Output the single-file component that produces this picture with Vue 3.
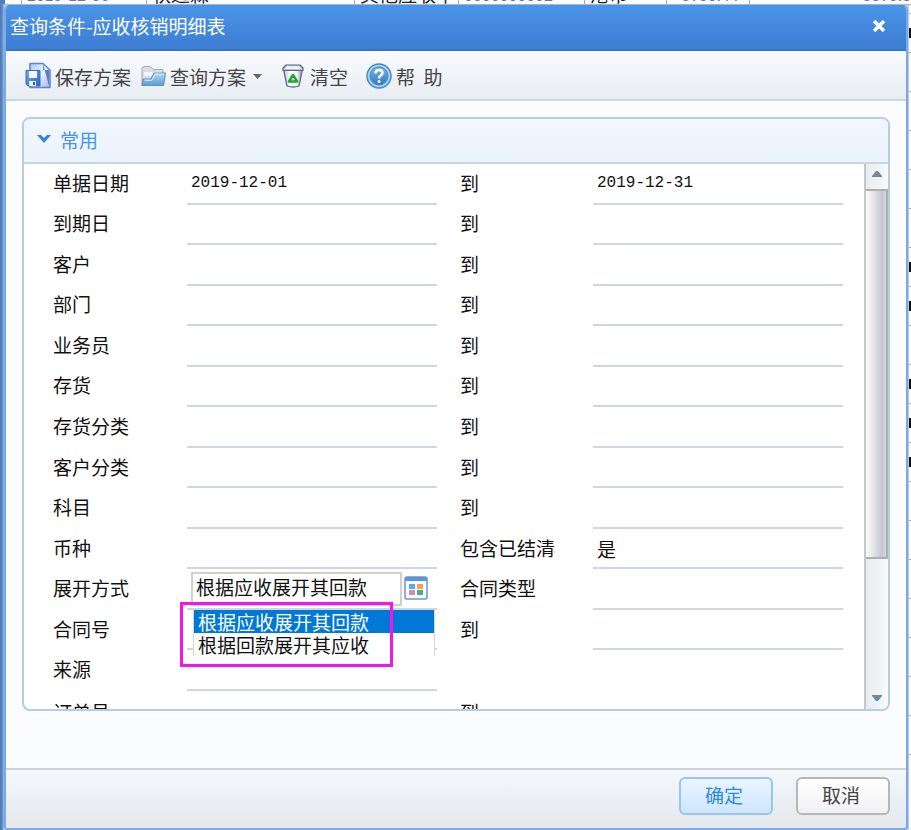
<script setup>
import { ref } from 'vue'

const ledger = [
  { cls: 'c-date', text: '2019-12-06' },
  { cls: 'c-name', text: '秋逸霖' },
  { cls: 'c-type', text: '其他应收单' },
  { cls: 'c-no', text: '0000000002' },
  { cls: 'c-cur', text: '港币' },
  { cls: 'c-amt', text: '8700.44' },
  { cls: 'c-end', text: '8870.3' },
]

const gutter = [
  { mark: true }, { mark: false }, { mark: false }, { mark: false }, { mark: false },
  { mark: false }, { mark: true }, { mark: true }, { mark: false }, { mark: true },
  { mark: true }, { mark: true }, { mark: false }, { mark: false }, { mark: false },
  { mark: false }, { mark: false }, { mark: false }, { mark: false }, { mark: false },
]

const rows = ref([
  { label: '单据日期', from: '2019-12-01', label2: '到', to: '2019-12-31', date: true },
  { label: '到期日', from: '', label2: '到', to: '' },
  { label: '客户', from: '', label2: '到', to: '' },
  { label: '部门', from: '', label2: '到', to: '' },
  { label: '业务员', from: '', label2: '到', to: '' },
  { label: '存货', from: '', label2: '到', to: '' },
  { label: '存货分类', from: '', label2: '到', to: '' },
  { label: '客户分类', from: '', label2: '到', to: '' },
  { label: '科目', from: '', label2: '到', to: '' },
  { label: '币种', from: '', label2: '包含已结清', to: '是' },
  { label: '展开方式', from: '根据应收展开其回款', label2: '合同类型', to: '', picker: true },
  { label: '合同号', from: '', label2: '到', to: '' },
  { label: '来源', from: '', label2: '', to: '' },
])

const options = ['根据应收展开其回款', '根据回款展开其应收']

function choose(row, option) {
  row.from = option
}
</script>

<template>
  <div class="desktop">
    <div class="ledger">
      <span v-for="c in ledger" :key="c.cls" :class="['cell', c.cls]">{{ c.text }}</span>
    </div>
    <div class="stage">
      <main class="dialog">
        <header class="titlebar">
          <h1>查询条件-应收核销明细表</h1>
          <button type="button" class="close" aria-label="关闭">
            <svg width="16" height="16" viewBox="0 0 16 16"><path d="M3 3L13 13M13 3L3 13" stroke="#fff" stroke-width="3.6" stroke-linejoin="round" /></svg>
          </button>
        </header>

        <nav class="toolbar">
          <button type="button" class="tool save">
            <svg width="28" height="28" viewBox="0 0 28 28">
              <defs>
                <linearGradient id="doc" x1="0" y1="0" x2="1" y2="1"><stop offset="0" stop-color="#a9c9f0" /><stop offset=".5" stop-color="#eaf3fc" /><stop offset="1" stop-color="#9cb9e6" /></linearGradient>
                <linearGradient id="disk" x1="0" y1="0" x2="1" y2="1"><stop offset="0" stop-color="#79a8e8" /><stop offset="1" stop-color="#2f62bd" /></linearGradient>
              </defs>
              <path d="M6 1.500H19L26 8V25.500H6Z" fill="url(#doc)" stroke="#6684c4" stroke-width="1.600" stroke-linejoin="round" />
              <path d="M19 2V8H25V24Z" fill="#5680ce" />
              <path d="M2 8.500H16V24H4L2 22Z" fill="url(#disk)" stroke="#3d68bd" stroke-linejoin="round" />
              <path d="M5 9H13V16H5Z" fill="#f4f9ff" /><path d="M5 19H12V24H5Z" fill="#e6effc" /><path d="M9 20H11V23H9Z" fill="#2c59b4" />
            </svg>
            <span>保存方案</span>
          </button>
          <button type="button" class="tool find">
            <svg width="28" height="28" viewBox="0 0 28 28">
              <defs><linearGradient id="fold" x1="0" y1="0" x2="0" y2="1"><stop offset="0" stop-color="#b5d9f4" /><stop offset="1" stop-color="#5c9bd0" /></linearGradient></defs>
              <path d="M3 23V6L5 4.500H11L14 7.500H24V12" fill="#d9dde0" stroke="#a5adb4" stroke-linejoin="round" />
              <path d="M5 10H22V14H5Z" fill="#f3f5f7" />
              <path d="M3 23.500L4 17H12L15 11H26.500L24.500 23.500Z" fill="url(#fold)" stroke="#5d96c6" stroke-width="1.200" stroke-linejoin="round" />
              <path d="M5.500 18.200H13L16 12.200H25" fill="none" stroke="#dceffb" />
            </svg>
            <span>查询方案</span>
            <svg class="caret" width="9" height="5" viewBox="0 0 9 5"><path d="M0 0H9L4.500 5Z" fill="#666" /></svg>
          </button>
          <button type="button" class="tool clear">
            <svg width="28" height="28" viewBox="0 0 28 28">
              <defs><linearGradient id="bin" x1="0" y1="0" x2="1" y2="0"><stop offset="0" stop-color="#b9c5d6" /><stop offset=".35" stop-color="#fff" /><stop offset=".7" stop-color="#f3f6fa" /><stop offset="1" stop-color="#8496ae" /></linearGradient></defs>
              <path d="M4.500 7L8 24Q14 26 20 24L23.500 7Z" fill="url(#bin)" stroke="#5d6c83" stroke-width="1.300" />
              <path d="M7 3H21L24 6V8.500H4V6Z" fill="#b9c3d2" stroke="#59677f" stroke-width="1.200" stroke-linejoin="round" />
              <path d="M8 4H20L22 7H6Z" fill="#edf1f6" />
              <path d="M14 13L18 19.500H10Z" fill="#f4faf4" stroke="#26a52d" stroke-width="2.600" stroke-linejoin="round" />
            </svg>
            <span>清空</span>
          </button>
          <button type="button" class="tool help">
            <svg width="28" height="28" viewBox="0 0 28 28">
              <defs><linearGradient id="ball" x1="0" y1="0" x2="0" y2="1"><stop offset="0" stop-color="#7eb4e4" /><stop offset="1" stop-color="#3178bf" /></linearGradient></defs>
              <circle cx="14" cy="14" r="12" fill="#a3d3f0" stroke="#4a8bbd" stroke-width="1.500" />
              <circle cx="14" cy="14" r="9" fill="url(#ball)" stroke="#4388c2" />
              <path d="M10.500 11.500Q10.500 8 14 8Q17.500 8 17.500 11Q17.500 12.500 15.500 13.800Q14 14.800 14 16.500" fill="none" stroke="#fff" stroke-width="2.400" />
              <circle cx="14" cy="19.500" r="1.500" fill="#fff" />
            </svg>
            <span>帮&nbsp; 助</span>
          </button>
        </nav>

        <section class="content">
          <div class="panel">
            <h2 class="panel-head">
              <svg width="16" height="10" viewBox="0 0 16 10"><path d="M1 1H5L8 4L11 1H15L8 9Z" fill="#3583dc" /></svg>
              <span>常用</span>
            </h2>
            <div class="panel-body">
              <form class="fields" @submit.prevent>
                <div class="grid">
                  <div v-for="(row, i) in rows" :key="row.label" class="row">
                    <label :for="'from' + i">{{ row.label }}</label>
                    <div v-if="row.picker" class="field combo">
                      <input :id="'from' + i" v-model="row.from" type="text" class="combo-input" />
                      <button type="button" class="pick" aria-label="选择">
                        <svg width="24" height="24" viewBox="0 0 24 24">
                          <rect x="1" y="1" width="22" height="22" rx="2" fill="#f8fbff" stroke="#7393cd" stroke-width="1.500" />
                          <path d="M1 2Q1 1 2 1H22Q23 1 23 2V5H1Z" fill="#5b96d8" />
                          <path d="M5 8H11V13H5Z" fill="#5aaaf5" /><path d="M13 8H19V13H13Z" fill="#f3a34e" />
                          <path d="M5 14H11V19H5Z" fill="#cf8fb4" /><path d="M13 14H19V19H13Z" fill="#51a99e" />
                        </svg>
                      </button>
                      <div class="menu" role="listbox">
                        <button v-for="o in options" :key="o" type="button" role="option" :aria-selected="o === row.from" :class="['option', { active: o === row.from }]" @click="choose(row, o)">{{ o }}</button>
                      </div>
                      <span class="highlight"></span>
                    </div>
                    <input v-else :id="'from' + i" v-model="row.from" type="text" :class="['field', { date: row.date }]" />
                    <template v-if="row.label2">
                      <label :for="'to' + i">{{ row.label2 }}</label>
                      <input :id="'to' + i" v-model="row.to" type="text" :class="['field', { date: row.date }]" />
                    </template>
                  </div>
                </div>
                <div class="row last">
                  <label for="orderFrom">订单号</label>
                  <input id="orderFrom" type="text" class="field" />
                  <label for="orderTo">到</label>
                  <input id="orderTo" type="text" class="field" />
                </div>
              </form>
              <div class="scroll">
                <button type="button" class="arrow" aria-label="向上"><svg width="10" height="6" viewBox="0 0 10 6"><path d="M0 6V5L4 0H6L10 5V6Z" fill="#75879a" /></svg></button>
                <div class="thumb"></div>
                <div class="track"></div>
                <button type="button" class="arrow down" aria-label="向下"><svg width="10" height="6" viewBox="0 0 10 6"><path d="M0 0H10V1L6 6H4L0 1Z" fill="#75879a" /></svg></button>
              </div>
            </div>
          </div>
        </section>

        <footer class="footer">
          <button type="button" class="btn primary">确定</button>
          <button type="button" class="btn">取消</button>
        </footer>
      </main>
      <div class="gutter">
        <div v-for="(g, i) in gutter" :key="i" :class="['tick', { mark: g.mark }]"></div>
      </div>
    </div>
  </div>
</template>

<style>
body {
  background: #f8fafc;
}
</style>

<style scoped>
* {
  box-sizing: border-box;
}
.desktop {
  display: flex;
  flex-direction: column;
  height: 100vh;
  overflow: hidden;
  font-family: "Noto Sans CJK SC", sans-serif;
  font-size: 19px;
  color: #111;
}
button,
input {
  font: inherit;
  color: inherit;
  margin: 0;
  padding: 0;
  border: 0;
  background: none;
  border-radius: 0;
}
button {
  cursor: pointer;
}
svg {
  display: block;
  flex: none;
}
.ledger {
  display: flex;
  align-items: flex-end;
  flex: none;
  height: 5px;
  overflow: hidden;
  padding-left: 16px;
  border-left: 5px solid #4f81bd;
  border-bottom: 1px solid #a7b6c6;
  background: #f9fbfd;
}
.cell {
  flex: none;
  line-height: 20px;
  font-size: 16px;
  white-space: nowrap;
  color: #222;
  border-right: 1px solid #aaa;
}
.c-date {
  width: 126px;
  padding-left: 5px;
  color: #777;
  border-left: 1px solid #aaa;
}
.c-name {
  width: 208px;
  padding-left: 5px;
  font-size: 19px;
}
.c-type {
  width: 104px;
  padding-left: 5px;
  font-size: 19px;
}
.c-no {
  width: 126px;
  padding-left: 5px;
  color: #777;
}
.c-cur {
  width: 82px;
  padding-left: 5px;
  font-size: 19px;
}
.c-amt {
  width: 83px;
  padding-left: 14px;
  color: #777;
}
.c-end {
  flex: 1;
  border-right: 0;
  text-align: right;
  color: #777;
}
.stage {
  display: flex;
  flex: 1;
  min-height: 0;
  background: linear-gradient(90deg, #4878b4, #6795cc 3px, #b8cde4 4px);
}
.dialog {
  display: flex;
  flex: 1;
  flex-direction: column;
  min-width: 0;
  margin-left: 4px;
  border: 2px solid #78a9e9;
  border-top: 0;
  border-radius: 5px 5px 4px 4px;
  background: #fbfcff;
  overflow: hidden;
}
.titlebar {
  display: flex;
  align-items: center;
  justify-content: space-between;
  flex: none;
  height: 46px;
  margin: 0 -2px;
  padding: 0 21px 2px 6px;
  color: #fff;
  background: linear-gradient(#4a94e8, #3d7dd2);
  border-bottom: 2px solid #3375ca;
}
h1,
h2 {
  margin: 0;
  font-size: 19px;
  font-weight: 400;
}
h1 {
  padding-bottom: 2px;
}
.toolbar {
  display: flex;
  align-items: center;
  flex: none;
  height: 50px;
  padding: 2px 18px 0;
  color: #444;
  background: linear-gradient(#f9fbfe, #e8edf2);
  border-bottom: 2px solid #c9d5e1;
}
.tool {
  display: flex;
  align-items: center;
  gap: 3px;
  margin-right: 8px;
  white-space: nowrap;
}
.find,
.clear {
  margin-right: 17px;
}
.caret {
  margin-left: 4px;
}
.content {
  flex: 1;
  min-height: 0;
  padding: 16px 16px 57px;
}
.panel {
  display: flex;
  flex-direction: column;
  height: 100%;
  overflow: hidden;
  border: 2px solid #b8cde0;
  border-radius: 8px;
  background: #fff;
}
.panel-head {
  display: flex;
  align-items: center;
  gap: 8px;
  flex: none;
  height: 45px;
  padding: 0 0 3px 12px;
  color: #4595e8;
  background: linear-gradient(#f1f7ff, #ebf3fc);
  border-bottom: 2px solid #c6d6e3;
}
.panel-body {
  display: flex;
  flex: 1;
  min-height: 0;
}
.fields {
  flex: 1;
  min-width: 0;
  overflow: hidden;
  padding: 0 21px 0 29px;
}
.grid {
  display: grid;
  grid-template-rows: repeat(13, 1fr);
  height: 527px;
}
.row {
  display: grid;
  grid-template-columns: 134px minmax(0, 1fr) 156px minmax(0, 1fr);
}
.row > label:nth-of-type(2) {
  padding-left: 23px;
}
.last {
  height: 41px;
}
label {
  align-self: center;
  padding-bottom: 3px;
  line-height: 28px;
  white-space: nowrap;
}
.last label {
  padding-bottom: 0;
}
.field {
  width: 100%;
  min-width: 0;
  padding-left: 4px;
  border-bottom: 2px solid #d2d7de;
  outline: none;
}
.date {
  font-family: "Liberation Mono", monospace;
  font-size: 16px;
}
.combo {
  position: relative;
  display: flex;
  align-items: center;
  gap: 2px;
}
.combo-input {
  flex: 1;
  min-width: 0;
  height: 34px;
  padding: 0 2px 4px 3px;
  border: 3px solid #d3d0c7;
  border-width: 2px;
  outline: none;
  background: #fff;
}
.pick {
  margin: 0 9px 2px 0;
}
.menu {
  position: absolute;
  z-index: 1;
  top: 40px;
  left: 6px;
  right: 2px;
  border: 1px solid #d2d7de;
  border-bottom: 0;
  background: #fff;
}
.option {
  display: block;
  width: 100%;
  height: 23px;
  padding-left: 4px;
  line-height: 23px;
  text-align: left;
}
.option.active {
  color: #fff;
  background: #0078d7;
}
.highlight {
  position: absolute;
  z-index: 2;
  top: 33px;
  left: -7px;
  width: 213px;
  height: 65px;
  border: 3px solid #f615e9;
  pointer-events: none;
}
.scroll {
  display: flex;
  flex-direction: column;
  flex: none;
  width: 24px;
  border-left: 2px solid #c5c8cb;
  background: linear-gradient(90deg, #e7ecf0, #f8fafb);
}
.arrow {
  display: flex;
  align-items: center;
  justify-content: center;
  height: 25px;
  padding-bottom: 6px;
}
.down {
  padding: 3px 0 0;
}
.thumb {
  flex: 369;
  border: 2px solid #adadb2;
  border-left: 0;
  background: linear-gradient(90deg, #fbfbfb, #e3e3e7 40%, #c5c6d2 80%, #d9d5de);
}
.track {
  flex: 126;
}
.footer {
  display: flex;
  align-items: flex-start;
  justify-content: flex-end;
  gap: 23px;
  flex: none;
  height: 60px;
  padding: 7px 16px 0;
  background: linear-gradient(#f4f7fc, #e4e7ec);
  border-top: 2px solid #ccd2d9;
}
.btn {
  width: 94px;
  height: 38px;
  padding: 0 4px 3px 0;
  border: 2px solid #b7b7b9;
  border-radius: 6px;
  color: #444;
  background: linear-gradient(#fff, #f1f1f3);
}
.primary {
  border-color: #98c5f1;
  color: #2c89e5;
  background: linear-gradient(#eaf6ff, #cee6ff);
}
.gutter {
  display: flex;
  flex-direction: column;
  flex: none;
  width: 3px;
  padding-top: 8px;
  background: #f9fafc;
  border-left: 1px solid #c5c9cf;
}
.tick {
  display: flex;
  align-items: center;
  flex: none;
  height: 39px;
  border-top: 1px solid #aaa;
}
.mark::after {
  content: "";
  width: 2px;
  height: 10px;
  background: #111;
}
</style>
